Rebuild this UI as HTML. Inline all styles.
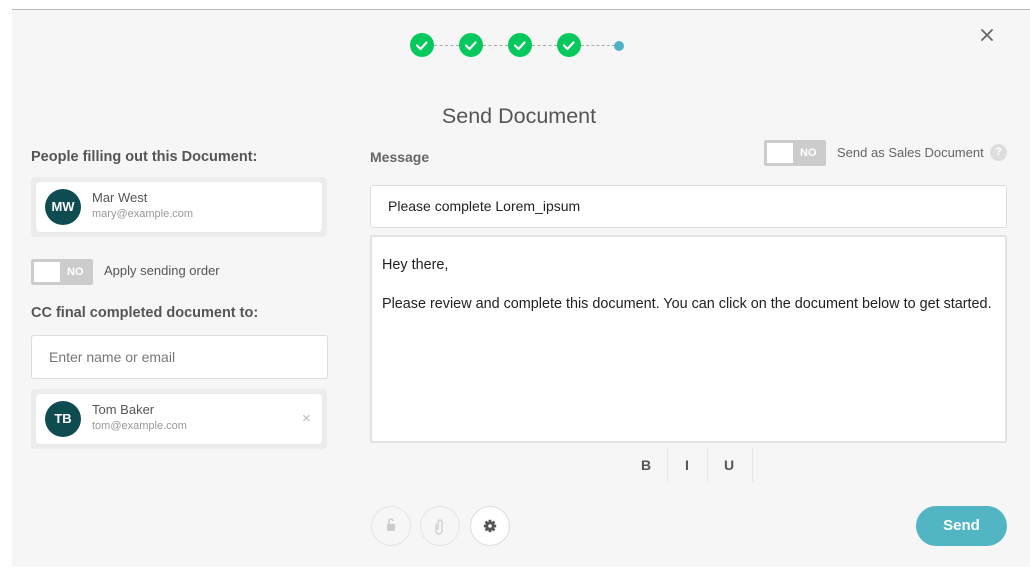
<!DOCTYPE html>
<html><head><meta charset="utf-8"><style>
*{box-sizing:border-box;margin:0;padding:0}
body{width:1030px;height:574px;background:#fff;font-family:"Liberation Sans",Arial,sans-serif;position:relative;overflow:hidden;color:#555}
.panel{position:absolute;left:12px;top:9px;width:1018px;height:558px;background:#f6f6f6;border-top:1px solid #bbb}
.a{position:absolute}
.chk{position:absolute;width:24px;height:24px;border-radius:50%;background:#05c95c;top:33px}
.dash{position:absolute;top:45px;height:0;border-top:1px dashed #aaa}
.card{position:absolute;left:31px;width:296px;height:60px;background:#ececec;border-radius:4px}
.card .in{position:absolute;left:5px;top:5px;width:286px;height:50px;background:#fff;border-radius:4px;box-shadow:0 0 1px #ddd}
.av{position:absolute;left:9px;top:7px;width:36px;height:36px;border-radius:50%;background:#0f4c52;color:#fff;font-weight:bold;font-size:13px;line-height:36px;text-align:center}
.nm{position:absolute;left:56px;top:8px;font-size:13px;color:#555}
.em{position:absolute;left:56px;top:26px;font-size:11px;color:#999}
.tg{position:absolute;width:62px;height:26px;background:#ccc;border-radius:2px}
.tg .w{position:absolute;left:3px;top:3px;width:26px;height:20px;background:#fff}
.tg .no{position:absolute;left:36px;top:7px;font-size:11px;font-weight:bold;color:#fff}
.lbl{font-size:14.5px;font-weight:bold;color:#555}
.btn{position:absolute;top:506px;width:40px;height:40px;border-radius:50%;border:1px solid #e4e4e4;background:#f6f6f6}
</style></head><body>
<div class="panel"></div>
<div class="dash" style="left:434px;width:25px"></div>
<div class="dash" style="left:483px;width:25px"></div>
<div class="dash" style="left:532px;width:25px"></div>
<div class="dash" style="left:581px;width:34px"></div>
<div class="chk" style="left:410px"></div><div class="chk" style="left:459px"></div><div class="chk" style="left:508px"></div><div class="chk" style="left:557px"></div>
<svg class="a" style="left:0;top:0" width="1030" height="80">
<g fill="none" stroke="#fff" stroke-width="2.2" stroke-linecap="round" stroke-linejoin="round">
<path d="M417 45.5l3.5 3.5 6-6.5"/><path d="M466 45.5l3.5 3.5 6-6.5"/><path d="M515 45.5l3.5 3.5 6-6.5"/><path d="M564 45.5l3.5 3.5 6-6.5"/>
<path d="M982 30l10 10M992 30l-10 10" stroke="#666" stroke-width="1.8"/></g>
<circle cx="619" cy="46" r="5" fill="#4fb3c5"/>
</svg>
<div class="a" style="left:0;width:1038px;top:104px;text-align:center;font-size:21.5px;color:#555">Send Document</div>

<div class="a lbl" style="left:31px;top:149px">People filling out this Document:</div>
<div class="card" style="top:177px"><div class="in"><div class="av">MW</div><div class="nm">Mar West</div><div class="em">mary@example.com</div></div></div>
<div class="tg" style="left:31px;top:259px"><div class="w"></div><div class="no">NO</div></div>
<div class="a" style="left:104px;top:263px;font-size:13px">Apply sending order</div>
<div class="a lbl" style="left:31px;top:305px">CC final completed document to:</div>
<div class="a" style="left:31px;top:335px;width:297px;height:44px;background:#fff;border:1px solid #ddd;border-radius:3px;font-size:14px;color:#777;padding:13px 0 0 17px">Enter name or email</div>
<div class="card" style="top:389px"><div class="in"><div class="av">TB</div><div class="nm">Tom Baker</div><div class="em">tom@example.com</div><div class="a" style="left:266px;top:16px;color:#bbb;font-size:15px">×</div></div></div>

<div class="a lbl" style="left:370px;top:149px;color:#666;font-size:14px">Message</div>
<div class="tg" style="left:764px;top:140px"><div class="w"></div><div class="no">NO</div></div>
<div class="a" style="left:837px;top:145px;font-size:13px;color:#666">Send as Sales Document</div>
<div class="a" style="left:990px;top:144px;width:17px;height:17px;border-radius:50%;background:#ddd;color:#fff;font-size:11px;font-weight:bold;text-align:center;line-height:17px">?</div>
<div class="a" style="left:370px;top:185px;width:637px;height:43px;background:#fff;border:1px solid #ddd;border-radius:3px;font-size:14px;color:#222;padding:12px 0 0 17px">Please complete Lorem_ipsum</div>
<div class="a" style="left:370px;top:235px;width:637px;height:208px;background:#fff;border:2px solid #e2e2e2;border-radius:2px;font-size:14.4px;color:#222;padding:18px 0 0 10px;line-height:39px"><div style="line-height:20px">Hey there,</div><div style="line-height:20px;margin-top:19px;white-space:nowrap">Please review and complete this document. You can click on the document below to get started.</div></div>
<div class="a" style="left:641px;top:457px;font-size:14px;font-weight:bold;color:#555">B</div>
<div class="a" style="left:685px;top:457px;font-size:14px;font-weight:bold;color:#555">I</div>
<div class="a" style="left:724px;top:457px;font-size:14px;font-weight:bold;color:#555">U</div>
<div class="a" style="left:667px;top:447px;width:1px;height:35px;background:#e8e8e8"></div>
<div class="a" style="left:707px;top:447px;width:1px;height:35px;background:#e8e8e8"></div>
<div class="a" style="left:752px;top:447px;width:1px;height:35px;background:#e8e8e8"></div>

<div class="btn" style="left:371px"></div><div class="btn" style="left:420px"></div><div class="btn" style="left:470px;background:#fff;border-color:#ddd"></div>
<svg class="a" style="left:0;top:500px" width="520" height="60">
<rect x="387" y="24" width="8" height="7" rx="1" fill="#ccc"/><path d="M389 24v-3a2 2 0 0 1 4 0" fill="none" stroke="#ccc" stroke-width="1.6"/>
<path d="M438 30v-8a2 2 0 0 1 4 0v9a3 3 0 0 1-6 0v-7" fill="none" stroke="#ccc" stroke-width="1.3"/>
<g transform="translate(490 26)" fill="#555">
<circle r="4.6"/>
<rect x="-1.4" y="-6.2" width="2.8" height="12.4"/>
<rect x="-1.4" y="-6.2" width="2.8" height="12.4" transform="rotate(45)"/>
<rect x="-1.4" y="-6.2" width="2.8" height="12.4" transform="rotate(90)"/>
<rect x="-1.4" y="-6.2" width="2.8" height="12.4" transform="rotate(135)"/>
<circle r="1.8" fill="#fff"/>
</g>
</svg>
<div class="a" style="left:916px;top:506px;width:91px;height:40px;border-radius:20px;background:#52b5c3;color:#fff;font-weight:bold;font-size:15px;text-align:center;line-height:40px">Send</div>
</body></html>
